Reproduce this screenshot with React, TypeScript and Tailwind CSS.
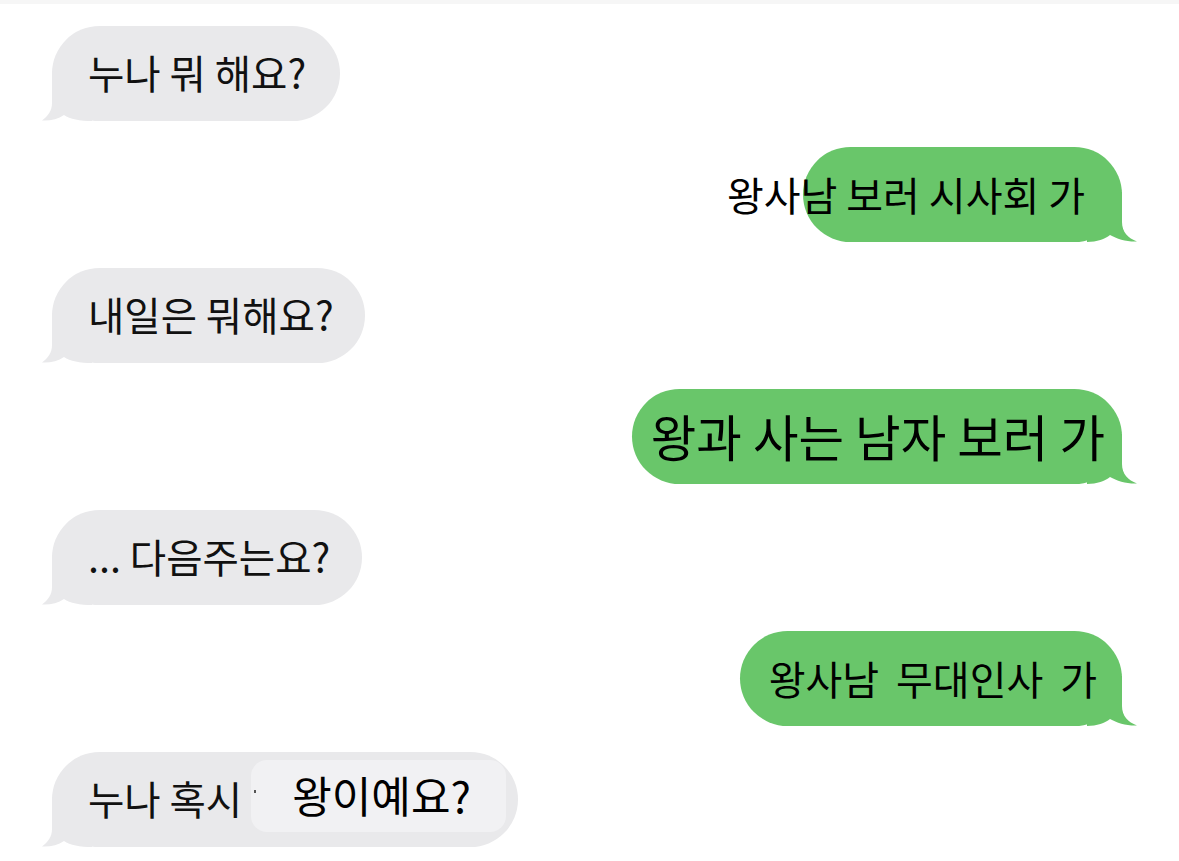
import React from "react";

const FONT = "font-['Noto_Sans_CJK_KR','Noto_Sans',sans-serif]";

function LeftTail({ color }: { color: string }) {
  return (
    <svg
      className="absolute left-[-10px] bottom-0"
      width="50"
      height="50"
      viewBox="0 0 50 50"
    >
      <path
        d="M10 0 L10 32 C10 40 6 45 0 49.5 C8 50 16 48 22 44 C28 48 38 50 50 50 L50 0 Z"
        fill={color}
      />
    </svg>
  );
}

function RightTail({ color }: { color: string }) {
  return (
    <svg
      className="absolute right-[-15px] bottom-0"
      width="50"
      height="50"
      viewBox="0 0 50 50"
    >
      <g transform="translate(50,0) scale(-1,1)">
        <path
          d="M15 0 L15 30 C15 40 9 46 0 49.5 C10 50 20 47 27 43 C32 47 40 50 50 50 L50 0 Z"
          fill={color}
        />
      </g>
    </svg>
  );
}

const GRAY = "#e9e9eb";
const GREEN = "#69c66a";

function Gray({ w, children }: { w: string; children: React.ReactNode }) {
  return (
    <div className="flex justify-start">
      <div
        className={`relative h-[95px] ${w} rounded-full bg-[#e9e9eb] flex items-center pl-[36px]`}
      >
        <LeftTail color={GRAY} />
        <div className="relative flex items-center whitespace-nowrap text-[39.5px] leading-none text-[#111] mt-[-3px]">
          {children}
        </div>
      </div>
    </div>
  );
}

function Green({
  w,
  pr,
  children,
}: {
  w: string;
  pr: string;
  children: React.ReactNode;
}) {
  return (
    <div className="flex justify-end">
      <div
        className={`relative h-[95px] ${w} rounded-full bg-[#69c66a] flex items-center justify-end ${pr}`}
      >
        <RightTail color={GREEN} />
        <div className="relative whitespace-nowrap leading-none text-black mt-[-2px]">
          {children}
        </div>
      </div>
    </div>
  );
}

export default function App() {
  return (
    <div className={`w-[1179px] h-[861px] bg-white overflow-hidden ${FONT}`}>
      <div className="h-[4px] bg-[#f6f6f6]" />
      <div className="flex flex-col gap-[26px] pt-[22px] pl-[52px] pr-[57px]">
        <Gray w="w-[288px]">누나 뭐 해요?</Gray>
        <Green w="w-[319px]" pr="pr-[37px]">
          <span className="text-[40px]">왕사남 보러 시사회 가</span>
        </Green>
        <Gray w="w-[313px]">내일은 뭐해요?</Gray>
        <Green w="w-[490px]" pr="pr-[17px]">
          <span className="inline-block text-[49.5px]">
            왕과 사는 남자 보러 가
          </span>
        </Green>
        <Gray w="w-[310px]">... 다음주는요?</Gray>
        <Green w="w-[382px]" pr="pr-[25px]">
          <span className="text-[40px] [word-spacing:8px]">
            왕사남 무대인사 가
          </span>
        </Green>
        <Gray w="w-[466px]">
          <span>누나 혹시</span>
          <span className="relative ml-[9px] mt-[-4px] flex items-center h-[72px] w-[255px] rounded-[16px] bg-[#f1f1f3] pl-[41px] pb-[4px] text-[43px] text-black">
            <span className="absolute left-[3px] top-[30px] h-[3px] w-[2px] bg-[#555]" />
            왕이예요?
          </span>
        </Gray>
      </div>
    </div>
  );
}
